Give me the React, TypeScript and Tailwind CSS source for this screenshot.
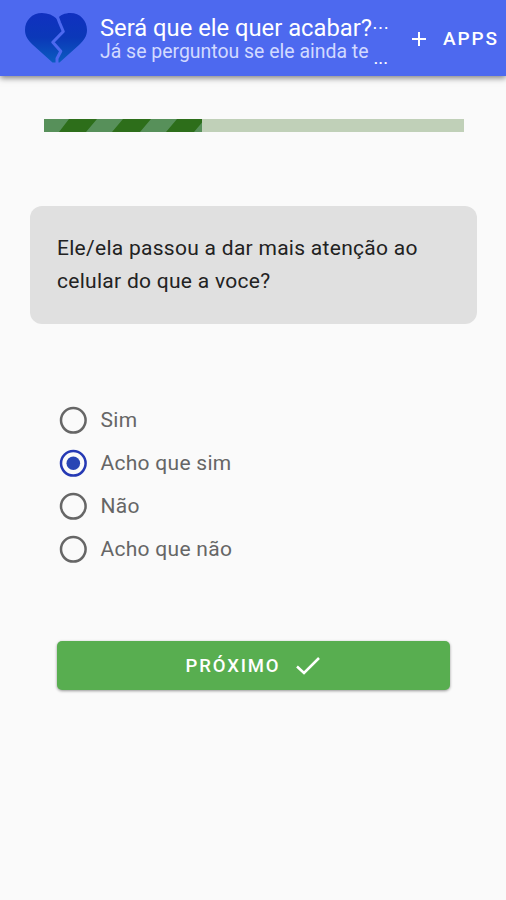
import React from 'react';

const options = [
  { label: 'Sim', checked: false },
  { label: 'Acho que sim', checked: true },
  { label: 'Não', checked: false },
  { label: 'Acho que não', checked: false }
];

const BrokenHeart = () => {
  return (
    <svg className="w-[62px] h-[50px] shrink-0" viewBox="0 0 62 50" fill="none">
      <defs>
        <linearGradient id="heart" x1="0" y1="0" x2="0" y2="1">
          <stop offset="0" stopColor="#1030c0" />
          <stop offset="0.5" stopColor="#0b38b8" />
          <stop offset="1" stopColor="#0b5cc0" />
        </linearGradient>
      </defs>
      <path
        d="M32 6C28 2 23 0 17 0C7 0 0 7.500 0 17C0 23 3 27.500 8 32L27.500 49.500H34.500L54 32C59 27.500 62 23 62 17C62 7.500 55 0 45.500 0C40 0 35 2 32 6Z"
        fill="url(#heart)"
      />
      <path d="M31 0L34.500 9.500L38.300 18.500L27.800 29.300L35.800 38.300L32 45.500V51" stroke="#4d69ef" strokeWidth="3" strokeLinejoin="round" />
    </svg>
  );
};

const Header = () => {
  return (
    <header className="flex h-[76px] bg-[#4d69ef] pl-[25px] text-white shadow-[0_2px_6px_rgba(0,0,0,0.5)]">
      <div className="pt-[13px]">
        <BrokenHeart />
      </div>
      <div className="ml-[13px] w-[311px] pt-4 whitespace-nowrap">
        <div className="flex h-[25px]">
          <h1 className="text-[23.750px] leading-[24px]">Será que ele quer acabar?</h1>
          <span className="text-[17px] leading-[23px]">⋯</span>
        </div>
        <div className="flex h-[22px]">
          <p className="text-[19.450px] leading-[21px] text-[#d2daff]">Já se perguntou se ele ainda te</p>
          <span className="ml-[5px] text-[18.500px] leading-[34px]">...</span>
        </div>
      </div>
      <div className="flex h-[76px] items-center pt-0.5">
        <svg className="h-4 w-4" viewBox="0 0 16 16" stroke="currentColor" strokeWidth="2">
          <path d="M8 1V15M1 8H15" />
        </svg>
        <span className="ml-4 text-[19px] font-medium tracking-[1.900px]">APPS</span>
      </div>
    </header>
  );
};

const App = () => {
  return (
    <div className="min-h-screen overflow-hidden bg-[#fafafa] font-['Roboto',sans-serif]">
      <Header />
      <main>
        <div className="ml-11 mt-[43px] h-[13px] w-[419.500px] bg-[#c0d0b8]">
          <svg className="h-[13px] w-[158px]" viewBox="0 0 158 13">
            <rect width="158" height="13" fill="#2d6e1a" />
            <path d="M-28 13L-17 0H25L15 13ZM42 13L53 0H79L68 13ZM96 13L107 0H133L122 13ZM150 13L161 0V13Z" fill="#57905a" />
          </svg>
        </div>

        <section className="ml-[30px] mt-[74px] h-[118px] w-[447px] rounded-xl bg-[#e0e0e0] px-[27px] pt-[26px]">
          <p className="w-[380px] text-[21px] leading-[32.500px] tracking-[0.280px] text-[#222222]">
            Ele/ela passou a dar mais atenção ao celular do que a voce?
          </p>
        </section>

        <div className="ml-[59px] mt-[74px]">
          {options.map((option) => (
            <label key={option.label} className="flex h-[43.200px] items-center">
              <svg className="h-7 w-7" viewBox="0 0 28 28" fill="none">
                <circle cx="14.300" cy="14.300" r="12.300" stroke={option.checked ? '#2539b4' : '#666666'} strokeWidth="2.500" />
                {option.checked && <circle cx="14.300" cy="14.300" r="6.800" fill="#2845b4" />}
              </svg>
              <span className="ml-[13.500px] pt-0.5 text-[21px] tracking-[0.280px] text-[#666666]">{option.label}</span>
            </label>
          ))}
        </div>

        <button className="ml-[57px] mt-[70px] flex h-[49px] w-[393px] items-center justify-center rounded-[5px] bg-[#58ae50] text-white shadow-[0_1px_3px_rgba(0,0,0,0.4)]">
          <span className="pt-[3px] text-[18.500px] font-medium tracking-[1.850px]">PRÓXIMO</span>
          <svg className="mt-px ml-4 mr-px h-[18px] w-6" viewBox="0 0 24 18" fill="none" stroke="currentColor" strokeWidth="2.500">
            <path d="M1 9.500L8 16L23 1" />
          </svg>
        </button>
      </main>
    </div>
  );
};

export default App;
